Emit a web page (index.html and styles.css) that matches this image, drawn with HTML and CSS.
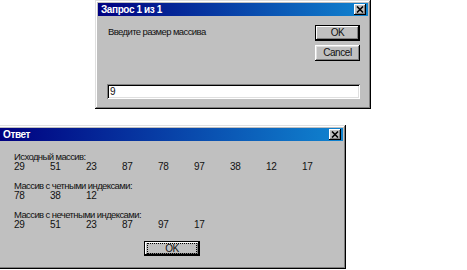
FILE: index.html
```html
<!DOCTYPE html>
<html>
<head>
<meta charset="utf-8">
<link rel="stylesheet" href="styles.css">
</head>
<body>
<div class="win win-top">
  <div class="title">
    <span class="title-text">Запрос 1 из 1</span>
    <span class="close"><svg width="8" height="7" viewBox="0 0 8 7"><path d="M1 0.5 L7 6.5 M7 0.5 L1 6.5" stroke="#000" stroke-width="1.6"/></svg></span>
  </div>
  <div class="top-body">
    <div class="top-row">
      <div class="prompt">Введите размер массива</div>
      <div class="btns">
        <div class="btn btn-default"><span>OK</span></div>
        <div class="btn"><span>Cancel</span></div>
      </div>
    </div>
    <div class="input">9</div>
  </div>
</div>

<div class="win win-bottom">
  <div class="title">
    <span class="title-text">Ответ</span>
    <span class="close"><svg width="8" height="7" viewBox="0 0 8 7"><path d="M1 0.5 L7 6.5 M7 0.5 L1 6.5" stroke="#000" stroke-width="1.6"/></svg></span>
  </div>
  <div class="ans-body">
    <div class="block">
      <div class="label">Исходный массив:</div>
      <div class="nums"><span>29</span><span>51</span><span>23</span><span>87</span><span>78</span><span>97</span><span>38</span><span>12</span><span>17</span></div>
    </div>
    <div class="block">
      <div class="label">Массив с четными индексами:</div>
      <div class="nums"><span>78</span><span>38</span><span>12</span></div>
    </div>
    <div class="block">
      <div class="label">Массив с нечетными индексами:</div>
      <div class="nums"><span>29</span><span>51</span><span>23</span><span>87</span><span>97</span><span>17</span></div>
    </div>
    <div class="ok-wrap">
      <div class="btn btn-default btn-ok"><span class="focus">OK</span></div>
    </div>
  </div>
</div>
</body>
</html>
```

FILE: styles.css
```css
html, body {
  margin: 0;
  padding: 0;
  background: #fff;
}
body {
  font-family: "Liberation Sans", Arial, sans-serif;
  font-size: 9.5px;
  letter-spacing: -0.6px;
  color: #111;
  width: 467px;
  height: 270px;
  overflow: hidden;
}
.win {
  box-sizing: border-box;
  background: #c0c0c0;
  padding: 3px;
  display: flex;
  flex-direction: column;
  box-shadow: inset -1px -1px #000, inset 1px 1px #dfdfdf, inset -2px -2px #808080, inset 2px 2px #fff;
}
.win-top {
  margin-left: 95px;
  width: 276px;
  height: 109px;
}
.win-bottom {
  margin-top: 16px;
  margin-left: -3px;
  width: 349px;
  height: 144px;
}
.title {
  height: 13px;
  flex: none;
  display: flex;
  align-items: center;
  justify-content: space-between;
  background: linear-gradient(90deg, #000080, #1084d0);
  color: #fff;
  font-weight: bold;
  font-size: 10px;
  letter-spacing: -0.4px;
  padding: 0 2px 0 3px;
}
.win-bottom .title {
  padding-left: 3px;
}
.title-text {
  line-height: 13px;
}
.close {
  box-sizing: border-box;
  width: 12px;
  height: 11px;
  background: #c0c0c0;
  display: flex;
  align-items: center;
  justify-content: center;
  box-shadow: inset -1px -1px #000, inset 1px 1px #fff, inset -2px -2px #808080;
}
.top-body {
  flex: 1;
  display: flex;
  flex-direction: column;
  justify-content: space-between;
  padding: 9px 8px 7px 9px;
}
.top-row {
  display: flex;
  justify-content: space-between;
}
.prompt {
  margin-left: 1px;
  line-height: 12px;
  margin-top: 1px;
}
.btns {
  display: flex;
  flex-direction: column;
  gap: 4px;
}
.btn {
  box-sizing: border-box;
  width: 45px;
  height: 16px;
  background: #c0c0c0;
  display: flex;
  align-items: center;
  justify-content: center;
  line-height: 10px;
  font-size: 10px;
  letter-spacing: -0.4px;
  box-shadow: inset -1px -1px #000, inset 1px 1px #fff, inset -2px -2px #808080, inset 2px 2px #dfdfdf;
}
.btn-default {
  border: 1px solid #000;
  box-shadow: inset -1px -1px #000, inset 1px 1px #fff, inset -2px -2px #808080;
}
.input {
  box-sizing: border-box;
  height: 15px;
  background: #fff;
  padding: 2px 3px;
  line-height: 11px;
  font-size: 10px;
  box-shadow: inset 1px 1px #808080, inset -1px -1px #fff, inset 2px 2px #000, inset -2px -2px #dfdfdf;
}
.ans-body {
  flex: 1;
  display: flex;
  flex-direction: column;
  padding: 11px 0 0 14px;
}
.block {
  margin-bottom: 9px;
}
.label, .nums {
  line-height: 10px;
  height: 10px;
}
.nums {
  display: grid;
  grid-template-columns: repeat(9, 36px);
  font-size: 10px;
  letter-spacing: -0.3px;
}
.ok-wrap {
  display: flex;
  justify-content: center;
  margin-top: 2px;
  margin-left: -14px;
  padding-left: 1px;
}
.btn-ok {
  width: 56px;
  height: 15px;
}
.focus {
  box-sizing: border-box;
  width: 48px;
  height: 9px;
  outline: 1px dotted #000;
  display: flex;
  align-items: center;
  justify-content: center;
}
```
